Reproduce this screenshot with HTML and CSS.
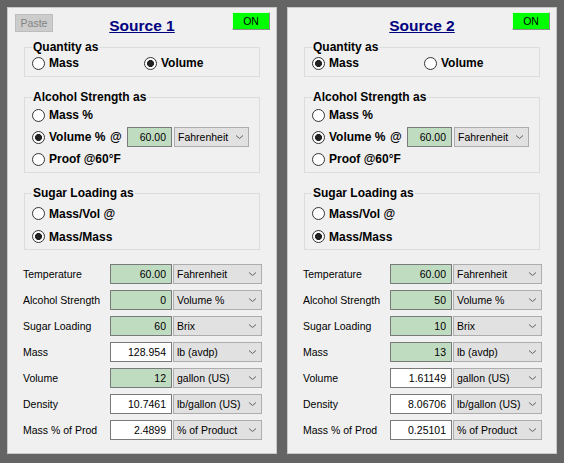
FILE: index.html
```html
<!DOCTYPE html>
<html>
<head>
    <meta charset="UTF-8">
    <title>Blend Sources</title>
    <link rel="stylesheet" href="styles.css">
</head>
<body>
    <div class="window">
        <!-- Source 1 -->
        <div class="panel">
            <div class="panel-head">
                <button class="btn-paste" disabled>Paste</button>
                <h2 class="source-title">Source 1</h2>
                <button class="btn-on">ON</button>
            </div>

            <fieldset class="group group-qty">
                <legend>Quantity as</legend>
                <div class="opt-pair">
                    <label class="opt"><input type="radio" name="q1">Mass</label>
                    <label class="opt"><input type="radio" name="q1" checked>Volume</label>
                </div>
            </fieldset>

            <fieldset class="group group-alc">
                <legend>Alcohol Strength as</legend>
                <label class="opt"><input type="radio" name="a1">Mass %</label>
                <div class="opt-line">
                    <label class="opt opt-fixed"><input type="radio" name="a1" checked>Volume %</label>
                    <span class="at">@</span>
                    <input class="num fixed num-short" type="text" value="60.00">
                    <div class="combo combo-short"><span>Fahrenheit</span><svg viewBox="0 0 17 6"><path d="M5 1.5 L8.5 4.5 L12 1.5"/></svg></div>
                </div>
                <label class="opt"><input type="radio" name="a1">Proof @60°F</label>
            </fieldset>

            <fieldset class="group group-sugar">
                <legend>Sugar Loading as</legend>
                <label class="opt"><input type="radio" name="s1">Mass/Vol @</label>
                <label class="opt"><input type="radio" name="s1" checked>Mass/Mass</label>
            </fieldset>

            <div class="props">
                <div class="prop-row">
                    <span class="prop-label">Temperature</span>
                    <input class="num fixed" type="text" value="60.00">
                    <div class="combo"><span>Fahrenheit</span><svg viewBox="0 0 17 6"><path d="M5 1.5 L8.5 4.5 L12 1.5"/></svg></div>
                </div>
                <div class="prop-row">
                    <span class="prop-label">Alcohol Strength</span>
                    <input class="num fixed" type="text" value="0">
                    <div class="combo"><span>Volume %</span><svg viewBox="0 0 17 6"><path d="M5 1.5 L8.5 4.5 L12 1.5"/></svg></div>
                </div>
                <div class="prop-row">
                    <span class="prop-label">Sugar Loading</span>
                    <input class="num fixed" type="text" value="60">
                    <div class="combo"><span>Brix</span><svg viewBox="0 0 17 6"><path d="M5 1.5 L8.5 4.5 L12 1.5"/></svg></div>
                </div>
                <div class="prop-row">
                    <span class="prop-label">Mass</span>
                    <input class="num" type="text" value="128.954">
                    <div class="combo"><span>lb (avdp)</span><svg viewBox="0 0 17 6"><path d="M5 1.5 L8.5 4.5 L12 1.5"/></svg></div>
                </div>
                <div class="prop-row">
                    <span class="prop-label">Volume</span>
                    <input class="num fixed" type="text" value="12">
                    <div class="combo"><span>gallon (US)</span><svg viewBox="0 0 17 6"><path d="M5 1.5 L8.5 4.5 L12 1.5"/></svg></div>
                </div>
                <div class="prop-row">
                    <span class="prop-label">Density</span>
                    <input class="num" type="text" value="10.7461">
                    <div class="combo"><span>lb/gallon (US)</span><svg viewBox="0 0 17 6"><path d="M5 1.5 L8.5 4.5 L12 1.5"/></svg></div>
                </div>
                <div class="prop-row">
                    <span class="prop-label">Mass % of Prod</span>
                    <input class="num" type="text" value="2.4899">
                    <div class="combo"><span>% of Product</span><svg viewBox="0 0 17 6"><path d="M5 1.5 L8.5 4.5 L12 1.5"/></svg></div>
                </div>
            </div>
        </div>

        <!-- Source 2 -->
        <div class="panel">
            <div class="panel-head">
                <span></span>
                <h2 class="source-title">Source 2</h2>
                <button class="btn-on">ON</button>
            </div>

            <fieldset class="group group-qty">
                <legend>Quantity as</legend>
                <div class="opt-pair">
                    <label class="opt"><input type="radio" name="q2" checked>Mass</label>
                    <label class="opt"><input type="radio" name="q2">Volume</label>
                </div>
            </fieldset>

            <fieldset class="group group-alc">
                <legend>Alcohol Strength as</legend>
                <label class="opt"><input type="radio" name="a2">Mass %</label>
                <div class="opt-line">
                    <label class="opt opt-fixed"><input type="radio" name="a2" checked>Volume %</label>
                    <span class="at">@</span>
                    <input class="num fixed num-short" type="text" value="60.00">
                    <div class="combo combo-short"><span>Fahrenheit</span><svg viewBox="0 0 17 6"><path d="M5 1.5 L8.5 4.5 L12 1.5"/></svg></div>
                </div>
                <label class="opt"><input type="radio" name="a2">Proof @60°F</label>
            </fieldset>

            <fieldset class="group group-sugar">
                <legend>Sugar Loading as</legend>
                <label class="opt"><input type="radio" name="s2">Mass/Vol @</label>
                <label class="opt"><input type="radio" name="s2" checked>Mass/Mass</label>
            </fieldset>

            <div class="props">
                <div class="prop-row">
                    <span class="prop-label">Temperature</span>
                    <input class="num fixed" type="text" value="60.00">
                    <div class="combo"><span>Fahrenheit</span><svg viewBox="0 0 17 6"><path d="M5 1.5 L8.5 4.5 L12 1.5"/></svg></div>
                </div>
                <div class="prop-row">
                    <span class="prop-label">Alcohol Strength</span>
                    <input class="num fixed" type="text" value="50">
                    <div class="combo"><span>Volume %</span><svg viewBox="0 0 17 6"><path d="M5 1.5 L8.5 4.5 L12 1.5"/></svg></div>
                </div>
                <div class="prop-row">
                    <span class="prop-label">Sugar Loading</span>
                    <input class="num fixed" type="text" value="10">
                    <div class="combo"><span>Brix</span><svg viewBox="0 0 17 6"><path d="M5 1.5 L8.5 4.5 L12 1.5"/></svg></div>
                </div>
                <div class="prop-row">
                    <span class="prop-label">Mass</span>
                    <input class="num fixed" type="text" value="13">
                    <div class="combo"><span>lb (avdp)</span><svg viewBox="0 0 17 6"><path d="M5 1.5 L8.5 4.5 L12 1.5"/></svg></div>
                </div>
                <div class="prop-row">
                    <span class="prop-label">Volume</span>
                    <input class="num" type="text" value="1.61149">
                    <div class="combo"><span>gallon (US)</span><svg viewBox="0 0 17 6"><path d="M5 1.5 L8.5 4.5 L12 1.5"/></svg></div>
                </div>
                <div class="prop-row">
                    <span class="prop-label">Density</span>
                    <input class="num" type="text" value="8.06706">
                    <div class="combo"><span>lb/gallon (US)</span><svg viewBox="0 0 17 6"><path d="M5 1.5 L8.5 4.5 L12 1.5"/></svg></div>
                </div>
                <div class="prop-row">
                    <span class="prop-label">Mass % of Prod</span>
                    <input class="num" type="text" value="0.25101">
                    <div class="combo"><span>% of Product</span><svg viewBox="0 0 17 6"><path d="M5 1.5 L8.5 4.5 L12 1.5"/></svg></div>
                </div>
            </div>
        </div>
    </div>
</body>
</html>
```

FILE: styles.css
```css
* {
    margin: 0;
    padding: 0;
    box-sizing: border-box;
}

body {
    background: #646464;
    font-family: 'Liberation Sans', Arial, sans-serif;
    font-size: 10.5px;
    color: #000;
}

.window {
    display: flex;
    gap: 10px;
    padding: 7px;
}

.panel {
    width: 270px;
    height: 447px;
    background: #f0f0f0;
    border: 1px solid #c8c8c8;
}

.panel-head {
    display: grid;
    grid-template-columns: 1fr auto 1fr;
    align-items: start;
    height: 32px;
}

.btn-paste {
    justify-self: start;
    margin: 6px 0 0 7px;
    width: 38px;
    height: 18px;
    background: #cccccc;
    border: 1px solid #bdbdbd;
    color: #838383;
    font: 10.5px 'Liberation Sans', Arial, sans-serif;
}

.source-title {
    margin-top: 9px;
    font-size: 15.5px;
    line-height: 18px;
    font-weight: bold;
    color: #000080;
    text-decoration: underline;
}

.btn-on {
    justify-self: end;
    margin: 4px 6px 0 0;
    width: 38px;
    height: 18px;
    background: #00ff00;
    border: 1px solid;
    border-color: #d8ffd8 #8c8c8c #8c8c8c #d8ffd8;
    color: #000;
    font: 10.5px 'Liberation Sans', Arial, sans-serif;
}

/* group boxes */
.group {
    margin: 0 16px;
    border: 1px solid #dcdcdc;
    padding: 0 7px;
    min-width: 0;
}

.group legend {
    padding: 0 1px;
    font-size: 12px;
    font-weight: bold;
    line-height: 14px;
}

.opt {
    display: flex;
    align-items: center;
    height: 22px;
    font-size: 12px;
    font-weight: bold;
}

.opt input {
    appearance: none;
    -webkit-appearance: none;
    flex: none;
    width: 13px;
    height: 13px;
    margin-right: 4px;
    border: 1px solid #333;
    border-radius: 50%;
    background: #fff;
}

.opt input:checked {
    background: radial-gradient(circle, #222 0 3.2px, #fff 3.8px);
}

.group-qty {
    padding-bottom: 4px;
}

.group-qty .opt {
    height: 18px;
}

.opt-pair {
    display: grid;
    grid-template-columns: 112px auto;
}

.group-alc {
    margin-top: 13px;
    padding-bottom: 2px;
}

.opt-line {
    display: flex;
    align-items: center;
    height: 22px;
}

.opt-fixed {
    width: 78px;
}

.at {
    width: 17px;
    font-size: 12px;
    font-weight: bold;
}

.group-sugar {
    margin-top: 13px;
    padding-top: 2px;
    padding-bottom: 1px;
}

.group-sugar .opt {
    height: 23px;
}

/* property rows */
.props {
    margin: 14px 0 0 15px;
}

.prop-row {
    display: flex;
    align-items: center;
    height: 20px;
    margin-bottom: 6px;
}

.prop-label {
    width: 87px;
}

.num {
    width: 62px;
    height: 20px;
    border: 1px solid #7a7a7a;
    background: #fff;
    text-align: right;
    padding: 0 5px 0 2px;
    font: 10.5px 'Liberation Sans', Arial, sans-serif;
    color: #000;
    outline: none;
}

.num.fixed {
    background: #c0dcc0;
}

.num-short {
    width: 45px;
}

.combo {
    display: flex;
    align-items: center;
    justify-content: space-between;
    width: 89px;
    height: 20px;
    margin-left: 1px;
    padding-left: 3px;
    border: 1px solid #adadad;
    background: #e1e1e1;
    white-space: nowrap;
}

.combo-short {
    width: 75px;
    margin-left: 2px;
}

.combo svg {
    flex: none;
    width: 17px;
    height: 6px;
}

.combo path {
    fill: none;
    stroke: #606060;
    stroke-width: 1;
}
```
